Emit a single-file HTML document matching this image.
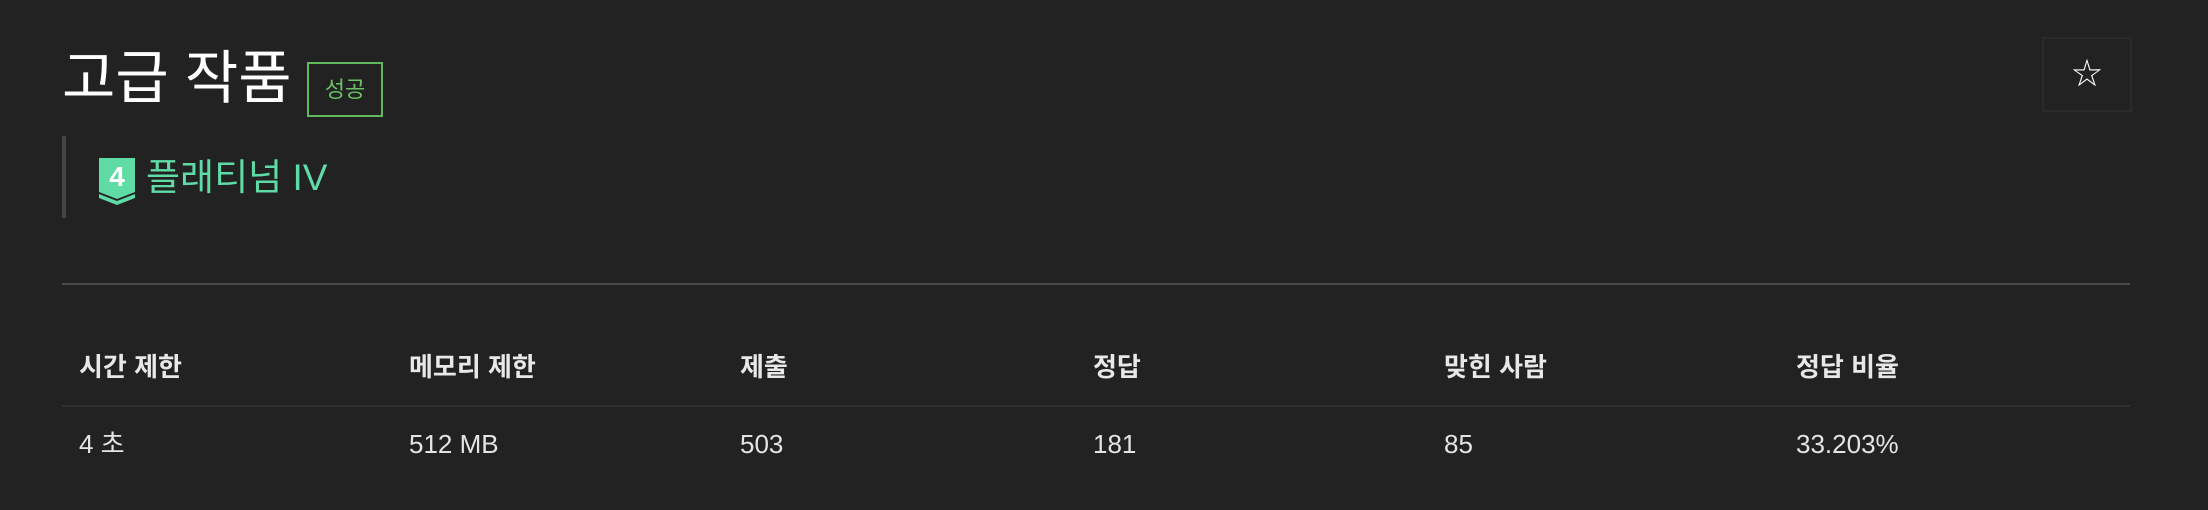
<!DOCTYPE html>
<html><head><meta charset="utf-8"><style>
body{margin:0;width:2208px;height:510px;background:#222;overflow:hidden;font-family:"Liberation Sans","Noto Sans CJK KR",sans-serif;color:#eee;position:relative}
.title{position:absolute;left:62px;top:44px;font-size:58px;color:#fff;line-height:70px;white-space:nowrap}
.badge{position:absolute;left:307px;top:62px;width:72px;height:51px;border:2px solid #62b85d;color:#6cc264;font-size:22px;line-height:51px;text-align:center}
.bar{position:absolute;left:62px;top:136px;width:4px;height:82px;background:#444}
.tier{position:absolute;left:146px;top:154px;font-size:37px;color:#5fdba5;line-height:48px;white-space:nowrap}
.star{position:absolute;left:2042px;top:37px;width:86px;height:71px;border:2px solid #2a2a2a;color:#fff;font-size:30px;text-align:center;line-height:71px}
.hr{position:absolute;left:62px;top:283px;width:2068px;height:2px;background:#4a4a4a}
.hr2{position:absolute;left:62px;top:405px;width:2068px;height:2px;background:#2e2e2e}
.c{position:absolute;font-size:26px;white-space:nowrap;line-height:36px}
.h{top:349px;font-weight:bold;color:#e8e8e8}
.d{top:426px;color:#e4e4e4}
</style></head><body>
<div class="title">고급 작품</div>
<div class="badge">성공</div>
<div class="bar"></div>
<svg style="position:absolute;left:99px;top:158px" width="36" height="48" viewBox="0 0 36 48">
<path d="M0 0H36V34L18 41L0 34Z" fill="#5fdba5"/>
<path d="M0 36L18 43L36 36V40L18 47L0 40Z" fill="#5fdba5"/>
<text x="18" y="28" text-anchor="middle" font-family="Liberation Sans" font-weight="bold" font-size="28" fill="#fff">4</text>
</svg>
<div class="tier">플래티넘 IV</div>
<div class="star">☆</div>
<div class="hr"></div>
<div class="c h" style="left:79px">시간 제한</div>
<div class="c h" style="left:409px">메모리 제한</div>
<div class="c h" style="left:740px">제출</div>
<div class="c h" style="left:1093px">정답</div>
<div class="c h" style="left:1444px">맞힌 사람</div>
<div class="c h" style="left:1796px">정답 비율</div>
<div class="hr2"></div>
<div class="c d" style="left:79px">4 초</div>
<div class="c d" style="left:409px">512 MB</div>
<div class="c d" style="left:740px">503</div>
<div class="c d" style="left:1093px">181</div>
<div class="c d" style="left:1444px">85</div>
<div class="c d" style="left:1796px">33.203%</div>
</body></html>
